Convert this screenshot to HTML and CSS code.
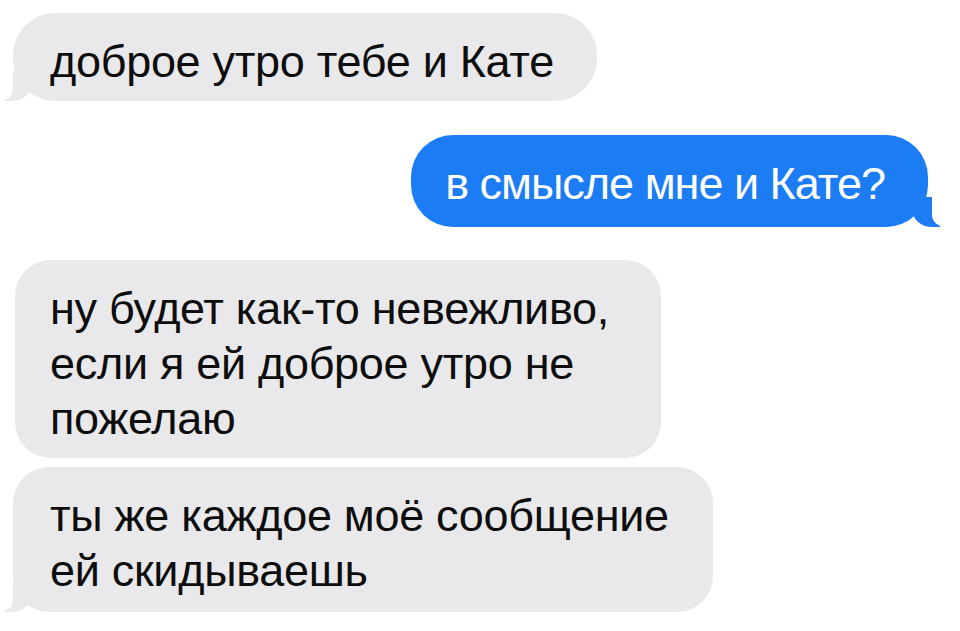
FILE: index.html
```html
<!DOCTYPE html>
<html lang="ru">
<head>
    <meta charset="UTF-8">
    <meta name="viewport" content="width=device-width, initial-scale=1.0">
    <title>Сообщения</title>
    <link rel="stylesheet" href="styles.css">
</head>
<body>
    <div class="chat">
        <div class="bubble in tail first">доброе утро тебе и Кате</div>
        <div class="bubble out tail">в смысле мне и Кате?</div>
        <div class="bubble in third">ну будет как-то невежливо,<br>если я ей доброе утро не<br>пожелаю</div>
        <div class="bubble in tail fourth">ты же каждое моё сообщение<br>ей скидываешь</div>
    </div>
</body>
</html>
```

FILE: styles.css
```css
body {
    margin: 0;
    background: #fff;
    font-family: "Liberation Sans", Arial, sans-serif;
}
.chat {
    display: flex;
    flex-direction: column;
    align-items: flex-start;
    padding: 13px 32px 0 13px;
}
.bubble {
    position: relative;
    font-size: 45px;
    line-height: 55px;
    letter-spacing: -0.3px;
    border-radius: 42px;
    padding: 21px 43px 12px 37px;
    color: #0d0d0d;
}
.in {
    background: #e9e9eb;
}
.out {
    background: #1b7cf4;
    color: #fff;
    letter-spacing: -1px;
    align-self: flex-end;
    margin-top: 34px;
    padding: 21px 43px 16px 34px;
}
.third {
    margin-top: 33px;
    margin-left: 2px;
    border-radius: 36px;
    padding: 21px 52px 12px 35px;
}
.fourth {
    margin-top: 9px;
    border-radius: 36px;
    padding: 21px 44px 14px 37px;
}
.tail::before,
.tail::after {
    content: "";
    position: absolute;
    bottom: 0;
    height: 30px;
}
.in.tail::before {
    left: -9px;
    width: 28px;
    background: #e9e9eb;
    border-bottom-right-radius: 20px 18px;
}
.in.tail::after {
    left: -16px;
    width: 16px;
    background: #fff;
    border-bottom-right-radius: 14px 12px;
}
.out.tail::before {
    right: -12px;
    width: 28px;
    background: #1b7cf4;
    border-bottom-left-radius: 20px 18px;
}
.out.tail::after {
    right: -20px;
    width: 16px;
    background: #fff;
    border-bottom-left-radius: 14px 12px;
}
```
